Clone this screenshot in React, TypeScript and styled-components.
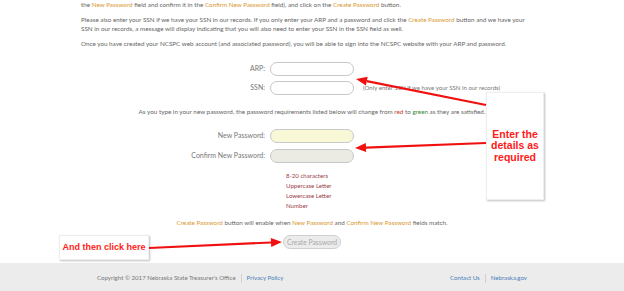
import React from "react";
import styled, { createGlobalStyle } from "styled-components";

const Global = createGlobalStyle`
  html, body { margin: 0; padding: 0; background: #fff; }
  body { font-family: Lato, "Open Sans", sans-serif; overflow: hidden; }
`;

const Page = styled.div`
  position: relative;
  width: 624px;
  height: 291px;
  overflow: hidden;
  background: #fff;
`;

const Content = styled.div`
  width: 462px;
  margin: 0 auto;
  color: #666;
  font-size: 6.3px;
  line-height: 9.5px;
`;

const Para = styled.p`
  margin: 0 0 5px 0;
  max-width: 445px;
`;

const Link = styled.span`
  color: #d8982f;
`;

const Form = styled.div<{ $top: number; $gap?: number }>`
  display: grid;
  grid-template-columns: 184px 84px auto;
  column-gap: 5px;
  align-items: center;
  margin-top: ${(p) => p.$top}px;
  row-gap: ${(p) => p.$gap ?? 5}px;
`;

const Label = styled.label`
  text-align: right;
  font-size: 7px;
  color: #777;
`;

const Input = styled.div<{ $bg?: string }>`
  height: 14px;
  box-sizing: border-box;
  border: 1px solid #c8c8c8;
  border-radius: 7px;
  background: ${(p) => p.$bg || "#fff"};
`;

const Hint = styled.span`
  font-size: 6.1px;
  color: #777;
  padding-left: 4px;
  white-space: nowrap;
`;

const Center = styled.div<{ $top: number }>`
  text-align: center;
  margin-top: ${(p) => p.$top}px;
  line-height: 10px;
`;

const Red = styled.span`color: #c0392b;`;
const Green = styled.span`color: #3b8a3b;`;

const Reqs = styled.ul`
  list-style: none;
  margin: 8px 0 0 205px;
  padding: 0;
  color: #9c3d4a;
  font-size: 6.1px;
  line-height: 10px;
`;

const Button = styled.button`
  display: block;
  margin: 7px auto 0;
  width: 58px;
  height: 14px;
  padding: 0;
  border: 1px solid #cfcfcf;
  border-radius: 7px;
  background: #ececec;
  color: #a8a8a8;
  font-family: inherit;
  font-size: 6.8px;
`;

const Footer = styled.footer`
  position: absolute;
  left: 0;
  right: 0;
  top: 263px;
  height: 28px;
  background: #ececec;
`;

const FooterInner = styled.div`
  width: 430px;
  margin: 0 auto;
  padding-top: 10px;
  display: flex;
  justify-content: space-between;
  font-size: 6.1px;
  line-height: 10px;
  color: #777;
`;

const FooterGroup = styled.div`
  display: flex;
  align-items: center;
`;

const Sep = styled.span`
  display: inline-block;
  width: 1px;
  height: 9px;
  background: #d0d0d0;
  margin: 0 5px;
`;

const FLink = styled.span`color: #4a7fb8;`;

const Note = styled.div<{ $x: number; $y: number; $w: number; $h: number; $size: number }>`
  position: absolute;
  left: ${(p) => p.$x}px;
  top: ${(p) => p.$y}px;
  width: ${(p) => p.$w}px;
  height: ${(p) => p.$h}px;
  background: #fff;
  box-shadow: 1px 1px 2px rgba(0, 0, 0, 0.25);
  border: 1px solid #eee;
  box-sizing: border-box;
  display: flex;
  align-items: center;
  justify-content: center;
  text-align: center;
  white-space: nowrap;
  color: #ff1a1a;
  font-family: "Liberation Sans", Arial, sans-serif;
  font-weight: bold;
  font-size: ${(p) => p.$size}px;
  line-height: 1.05;
`;

const Arrows = styled.svg`
  position: absolute;
  left: 0;
  top: 0;
  pointer-events: none;
`;

function Arrow({ x1, y1, x2, y2 }: { x1: number; y1: number; x2: number; y2: number }) {
  const ang = Math.atan2(y2 - y1, x2 - x1);
  const len = 11;
  const wid = 4.5;
  const bx = x2 - len * Math.cos(ang);
  const by = y2 - len * Math.sin(ang);
  const px = -Math.sin(ang) * wid;
  const py = Math.cos(ang) * wid;
  return (
    <g>
      <line x1={x1} y1={y1} x2={bx} y2={by} stroke="#f01010" strokeWidth={2.2} />
      <polygon points={`${x2},${y2} ${bx + px},${by + py} ${bx - px},${by - py}`} fill="#f01010" />
    </g>
  );
}

export default function App() {
  return (
    <Page>
      <Global />
      <Content>
        <Para>
          the <Link>New Password</Link> field and confirm it in the <Link>Confirm New Password</Link> field), and click on the <Link>Create Password</Link> button.
        </Para>
        <Para>
          Please also enter your SSN if we have your SSN in our records. If you only enter your ARP and a password and click the <Link>Create Password</Link> button and we have your SSN in our records, a message will display indicating that you will also need to enter your SSN in the SSN field as well.
        </Para>
        <Para>
          Once you have created your NCSPC web account (and associated password), you will be able to sign into the NCSPC website with your ARP and password.
        </Para>
        <Form $top={14}>
          <Label>ARP:</Label>
          <Input />
          <span />
          <Label>SSN:</Label>
          <Input />
          <Hint>(Only enter SSN if we have your SSN in our records)</Hint>
        </Form>
        <Center $top={12}>
          As you type in your new password, the password requirements listed below will change from <Red>red</Red> to <Green>green</Green> as they are satisfied.
        </Center>
        <Form $top={12} $gap={6}>
          <Label>New Password:</Label>
          <Input $bg="#f8f8d6" />
          <span />
          <Label>Confirm New Password:</Label>
          <Input $bg="#ebebe4" />
          <span />
        </Form>
        <Reqs>
          <li>8-20 characters</li>
          <li>Uppercase Letter</li>
          <li>Lowercase Letter</li>
          <li>Number</li>
        </Reqs>
        <Center $top={7}>
          <Link>Create Password</Link> button will enable when <Link>New Password</Link> and <Link>Confirm New Password</Link> fields match.
        </Center>
        <Button>Create Password</Button>
      </Content>
      <Footer>
        <FooterInner>
          <FooterGroup>
            Copyright © 2017 Nebraska State Treasurer's Office
            <Sep />
            <FLink>Privacy Policy</FLink>
          </FooterGroup>
          <FooterGroup>
            <FLink>Contact Us</FLink>
            <Sep />
            <FLink>Nebraska.gov</FLink>
          </FooterGroup>
        </FooterInner>
      </Footer>
      <Note $x={486} $y={92} $w={58} $h={108} $size={10.5}>
        Enter the
        <br />
        details as
        <br />
        required
      </Note>
      <Note $x={59} $y={235} $w={90} $h={25} $size={9}>
        And then click here
      </Note>
      <Arrows width={624} height={291}>
        <Arrow x1={486} y1={105} x2={356} y2={79} />
        <Arrow x1={486} y1={143} x2={355} y2={148} />
        <Arrow x1={149} y1={248} x2={282} y2={242} />
      </Arrows>
    </Page>
  );
}
